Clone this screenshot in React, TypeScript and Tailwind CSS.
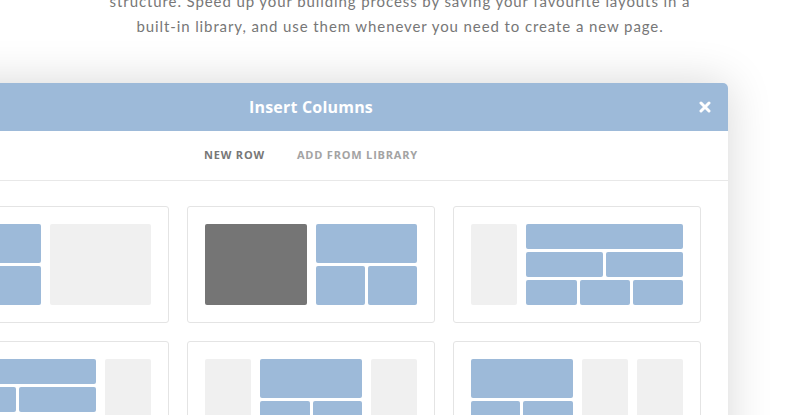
import React from 'react';

const Blue: React.FC<{ className?: string }> = ({ className = '' }) => (
  <div className={`bg-[#9dbad9] rounded-[2px] flex-1 ${className}`} />
);

const Gray: React.FC<{ className?: string }> = ({ className = '' }) => (
  <div className={`bg-[#f0f0f0] rounded-[2px] ${className}`} />
);

const Split: React.FC<{ n: number }> = ({ n }) => (
  <div className="flex-1 flex gap-[3px]">
    {Array.from({ length: n }).map((_, i) => (
      <Blue key={i} />
    ))}
  </div>
);

const Card: React.FC<{ children: React.ReactNode }> = ({ children }) => (
  <div className="border border-[#e4e4e4] rounded-[3px] bg-white px-[17px] py-[17px]">
    <div className="grid grid-cols-4 gap-[9px] h-[81px]">{children}</div>
  </div>
);

const App: React.FC = () => {
  return (
    <div className="w-[800px] h-[415px] overflow-hidden bg-white relative" style={{ fontFamily: '"Open Sans", "Liberation Sans", sans-serif' }}>
      <p className="mt-[-11px] text-center text-[15px] leading-[25px] text-[#777] tracking-[0.9px]" style={{ fontFamily: 'Lato, "Liberation Sans", sans-serif' }}>
        structure. Speed up your building process by saving your favourite layouts in a
        <br />
        built-in library, and use them whenever you need to create a new page.
      </p>

      <div className="mt-[44px] ml-[-106px] w-[834px] bg-white rounded-t-[5px] shadow-[0_0_45px_rgba(0,0,0,0.16)]">
        {/* Header */}
        <div className="relative h-[48px] bg-[#9dbad9] rounded-t-[5px] flex items-center justify-center">
          <h2 className="text-white text-[16px] font-bold tracking-[0.2px]">Insert Columns</h2>
          <button className="absolute right-[17px] top-[18px] text-white">
            <svg width="12" height="12" viewBox="0 0 12 12">
              <path d="M2 2 L10 10 M10 2 L2 10" stroke="white" strokeWidth="3" strokeLinecap="round" />
            </svg>
          </button>
        </div>

        {/* Tabs */}
        <div className="h-[50px] border-b border-[#e8e8e8] flex items-center justify-center gap-[32px] text-[11px] font-bold tracking-[0.8px] uppercase">
          <span className="text-[#777]">New Row</span>
          <span className="text-[#a3a3a3]">Add From Library</span>
        </div>

        {/* Layouts */}
        <div className="px-[27px] pt-[25px] pb-[28px] grid grid-cols-3 gap-[18px]">
          <Card>
            <div className="col-span-2 flex flex-col gap-[3px]">
              <Blue />
              <Split n={2} />
            </div>
            <Gray className="col-span-2" />
          </Card>
          <Card>
            <div className="col-span-2 bg-[#757575] rounded-[2px]" />
            <div className="col-span-2 flex flex-col gap-[3px]">
              <Blue />
              <Split n={2} />
            </div>
          </Card>
          <Card>
            <Gray />
            <div className="col-span-3 flex flex-col gap-[3px]">
              <Blue />
              <Split n={2} />
              <Split n={3} />
            </div>
          </Card>

          <Card>
            <div className="col-span-3 flex flex-col gap-[3px]">
              <Blue />
              <Split n={2} />
              <Split n={3} />
            </div>
            <Gray />
          </Card>
          <Card>
            <Gray />
            <div className="col-span-2 flex flex-col gap-[3px]">
              <Blue />
              <Split n={2} />
            </div>
            <Gray />
          </Card>
          <Card>
            <div className="col-span-2 flex flex-col gap-[3px]">
              <Blue />
              <Split n={2} />
            </div>
            <Gray />
            <Gray />
          </Card>
        </div>
      </div>
    </div>
  );
};

export default App;
